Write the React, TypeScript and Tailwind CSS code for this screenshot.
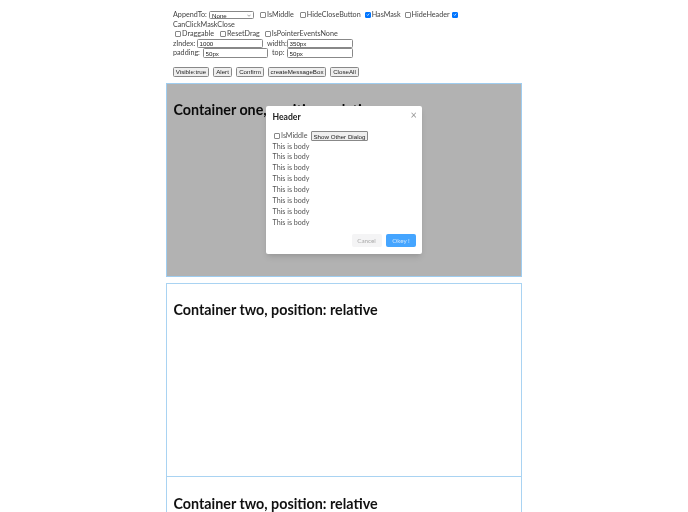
import React from "react";

const sans = "font-['Lato','Open_Sans',sans-serif]";
const arial = "font-['Liberation_Sans',Arial,sans-serif]";

function Check({ checked = false }: { checked?: boolean }) {
  return (
    <span
      className={`inline-flex items-center justify-center shrink-0 w-[6px] h-[6px] mr-[1px] rounded-[1px] border-[0.6px] ${
        checked ? "bg-[#0075ff] border-[#0075ff]" : "bg-white border-[#888]"
      }`}
    >
      {checked && (
        <svg viewBox="0 0 10 10" className="w-[5px] h-[5px]">
          <path d="M2 5.2 L4.2 7.4 L8 2.8" fill="none" stroke="white" strokeWidth="1.8" />
        </svg>
      )}
    </span>
  );
}

function Btn({ children, w }: { children: React.ReactNode; w: string }) {
  return (
    <button className={`${w} h-[10px] p-0 text-[6.2px] leading-[8px] text-[#222] bg-[#efefef] border-[0.7px] border-[#888] rounded-[1.5px] ${arial}`}>
      {children}
    </button>
  );
}

function Field({ w, value }: { w: string; value: string }) {
  return (
    <input
      readOnly
      value={value}
      className={`${w} h-[9.5px] px-[1.5px] text-[6.2px] text-[#222] bg-white border-[0.7px] border-[#888] rounded-[1.5px] outline-none ${arial}`}
    />
  );
}

function Heading({ children }: { children: React.ReactNode }) {
  return <h2 className={`text-[14.3px] leading-[20px] font-bold text-[#111] ${sans}`}>{children}</h2>;
}

export default function App() {
  return (
    <div className="w-[688px] h-[512px] overflow-hidden bg-white flex justify-center blur-[0.3px]">
      <div className="w-[356px]">
        <div className={`pt-[10px] pl-[7px] h-[83px] text-[7.2px] leading-[9.6px] text-[#444] ${sans}`}>
          <div className="flex items-center h-[9.6px]">
            <span className="w-[36px]">AppendTo:</span>
            <div className="relative w-[45px] h-[8px] bg-white border-[0.7px] border-[#888] rounded-[1.5px]">
              <span className={`block pl-[2px] text-[6.2px] leading-[7px] text-[#222] ${arial}`}>None</span>
              <svg viewBox="0 0 10 6" className="absolute right-[2px] top-[2px] w-[4px] h-[3px]">
                <path d="M1 1 L5 5 L9 1" fill="none" stroke="#555" strokeWidth="1.4" />
              </svg>
            </div>
            <span className="ml-[6px] flex items-center"><Check />IsMiddle</span>
            <span className="ml-[6px] flex items-center"><Check />HideCloseButton</span>
            <span className="ml-[4px] flex items-center"><Check checked />HasMask</span>
            <span className="ml-[4px] flex items-center"><Check />HideHeader</span>
            <span className="ml-[2px] flex items-center"><Check checked /></span>
          </div>
          <div className="h-[9.6px]">CanClickMaskClose</div>
          <div className="flex items-center h-[9.6px] pl-[2px]">
            <span className="flex items-center"><Check />Draggable</span>
            <span className="ml-[6px] flex items-center"><Check />ResetDrag</span>
            <span className="ml-[5px] flex items-center"><Check />IsPointerEventsNone</span>
          </div>
          <div className="flex items-center h-[9.6px]">
            <span className="w-[24px]">zIndex:</span>
            <Field w="w-[66px]" value="1000" />
            <span className="w-[24px] pl-[4px]">width:</span>
            <Field w="w-[66px]" value="350px" />
          </div>
          <div className="flex items-center h-[9.6px]">
            <span className="w-[30px]">padding:</span>
            <Field w="w-[65px]" value="50px" />
            <span className="w-[19px] pl-[4px]">top:</span>
            <Field w="w-[66px]" value="50px" />
          </div>
          <div className="flex items-center gap-[4px] mt-[9px]">
            <Btn w="w-[36px]">Visible:true</Btn>
            <Btn w="w-[19px]">Alert</Btn>
            <Btn w="w-[28px]">Confirm</Btn>
            <Btn w="w-[58px]">createMessageBox</Btn>
            <Btn w="w-[29px]">CloseAll</Btn>
          </div>
        </div>

        <div className="relative h-[194px] border-[1.5px] border-[#9fcdf0] pl-[6.5px] pt-[15.5px] overflow-hidden">
          <Heading>Container one, position: relative</Heading>
          <div className="absolute inset-0 bg-black/30" />
          <div className={`absolute left-[98.5px] top-[22px] w-[156.5px] h-[148px] bg-white rounded-[2px] shadow-md ${sans}`}>
            <div className="absolute right-[5px] top-[2.5px] text-[11px] leading-[11px] text-[#999]">×</div>
            <div className="pl-[7px] pt-[5.5px] text-[8.6px] leading-[11px] font-bold text-[#222]">Header</div>
            <div className="pl-[7px] pt-[8.5px] text-[7.1px] leading-[10.9px] text-[#555]">
              <div className="flex items-center h-[10px] mb-[0.5px] pl-[1.5px]">
                <Check />
                <span>IsMiddle</span>
                <button className={`ml-[3.5px] w-[57px] h-[9.5px] p-0 text-[6.2px] leading-[7px] text-[#222] bg-[#efefef] border-[0.7px] border-[#888] rounded-[1px] ${arial}`}>
                  Show Other Dialog
                </button>
              </div>
              {Array.from({ length: 8 }).map((_, i) => (
                <div key={i}>This is body</div>
              ))}
            </div>
            <div className="absolute right-[6px] bottom-[7px] flex gap-[4.5px]">
              <button className="w-[30px] h-[13px] rounded-[2px] bg-[#f4f4f5] text-[#aaa] text-[6.3px]">Cancel</button>
              <button className="w-[30px] h-[13px] rounded-[2px] bg-[#45a5ff] text-white/70 text-[6.3px]">Okey !</button>
            </div>
          </div>
        </div>

        <div className="mt-[6px] h-[194px] border-[1.5px] border-[#a9d3f2] pl-[6.5px] pt-[15.5px]">
          <Heading>Container two, position: relative</Heading>
        </div>
        <div className="h-[194px] border-[1.5px] border-[#a9d3f2] border-t-0 pl-[6.5px] pt-[17px]">
          <Heading>Container two, position: relative</Heading>
        </div>
      </div>
    </div>
  );
}
